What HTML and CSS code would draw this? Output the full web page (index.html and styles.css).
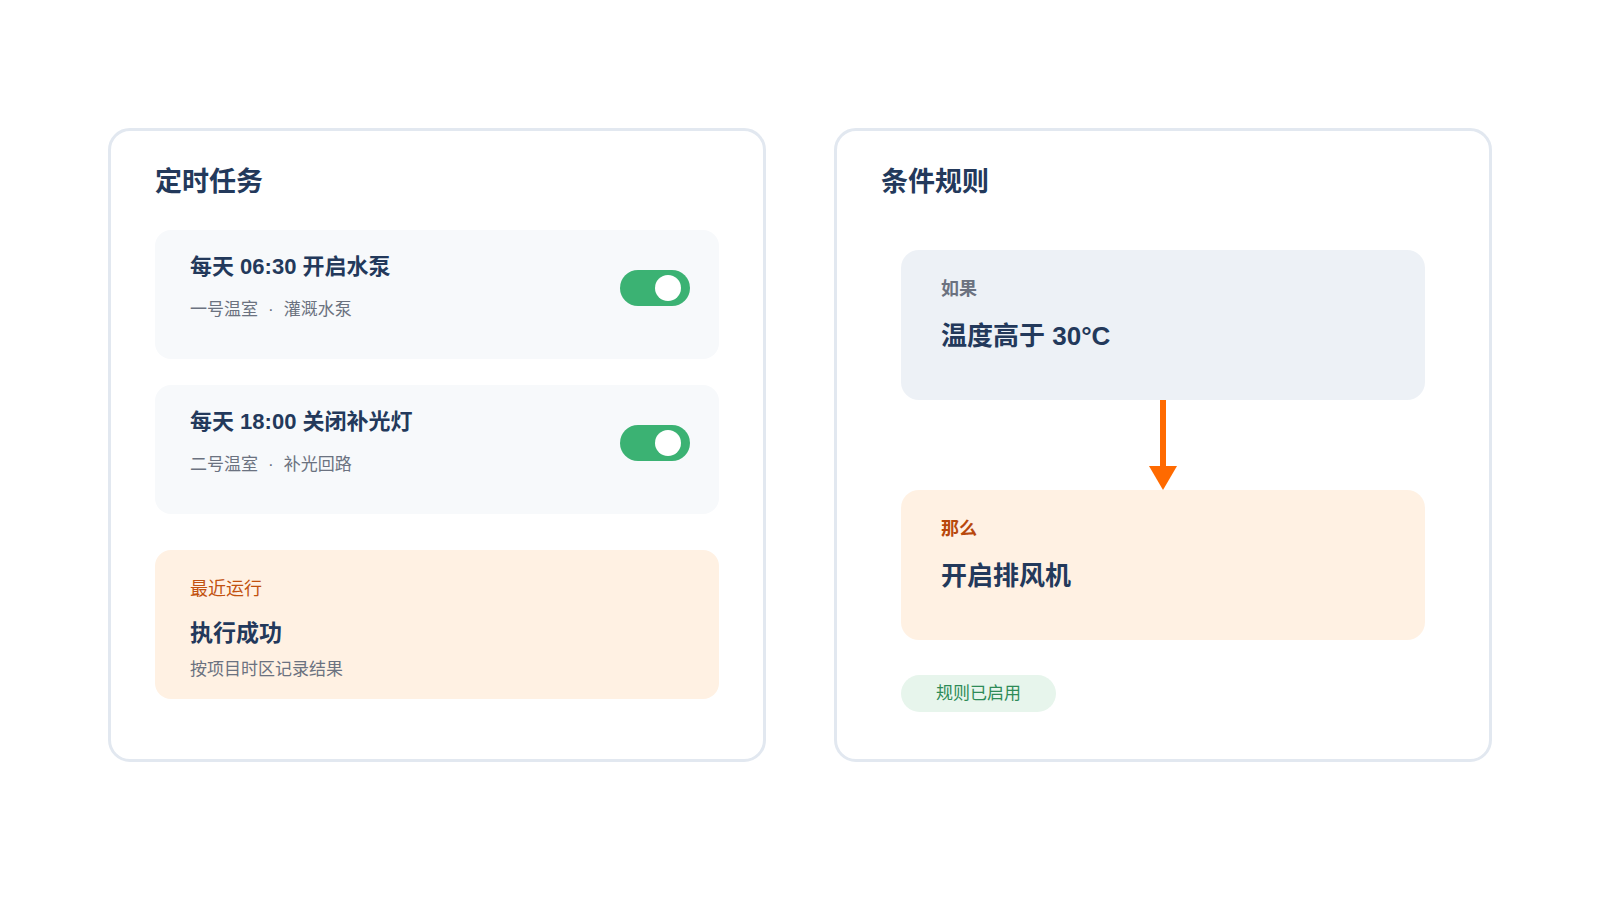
FILE: index.html
```html
<!DOCTYPE html>
<html lang="zh-CN">
<head>
    <meta charset="UTF-8">
    <meta name="viewport" content="width=device-width, initial-scale=1.0">
    <title>定时任务与条件规则</title>
    <link rel="stylesheet" href="styles.css">
</head>
<body>
<main class="board">

    <!-- 定时任务 -->
    <section class="panel">
        <h2 class="panel-title">定时任务</h2>

        <div class="task">
            <div class="task-text">
                <div class="task-name">每天 06:30 开启水泵</div>
                <div class="task-meta">一号温室<span class="sep">·</span>灌溉水泵</div>
            </div>
            <span class="toggle"><span class="knob"></span></span>
        </div>

        <div class="task">
            <div class="task-text">
                <div class="task-name">每天 18:00 关闭补光灯</div>
                <div class="task-meta">二号温室<span class="sep">·</span>补光回路</div>
            </div>
            <span class="toggle"><span class="knob"></span></span>
        </div>

        <div class="last-run">
            <div class="last-label">最近运行</div>
            <div class="last-result">执行成功</div>
            <div class="last-note">按项目时区记录结果</div>
        </div>
    </section>

    <!-- 条件规则 -->
    <section class="panel">
        <h2 class="panel-title">条件规则</h2>

        <div class="flow">
            <div class="step step-if">
                <div class="step-label">如果</div>
                <div class="step-value">温度高于 30°C</div>
            </div>

            <div class="connector">
                <svg width="28" height="90" viewBox="0 0 28 90">
                    <rect x="11" y="0" width="6" height="67" fill="#ff6a00"/>
                    <polygon points="0,66 28,66 14,90" fill="#ff6a00"/>
                </svg>
            </div>

            <div class="step step-then">
                <div class="step-label">那么</div>
                <div class="step-value">开启排风机</div>
            </div>

            <span class="pill">规则已启用</span>
        </div>
    </section>

</main>
</body>
</html>
```

FILE: styles.css
```css
body {
    margin: 0;
    background: #ffffff;
    font-family: "Liberation Sans", "Noto Sans CJK SC", sans-serif;
    color: #23395b;
}

.board {
    display: grid;
    grid-template-columns: 658px 658px;
    column-gap: 68px;
    justify-content: center;
    padding-top: 128px;
}

.panel {
    border: 3px solid #e2e8f0;
    border-radius: 22px;
    background: #fff;
    padding: 34px 44px 27px 44px;
}

.panel-title {
    margin: 0 0 31px 0;
    font-size: 27px;
    line-height: 34px;
    font-weight: 700;
    color: #23395b;
}

.task {
    display: flex;
    align-items: center;
    justify-content: space-between;
    background: #f7f9fb;
    border-radius: 16px;
    padding: 22px 29px 37px 35px;
    margin-bottom: 26px;
}

.task-name {
    font-size: 22px;
    line-height: 30px;
    font-weight: 700;
}

.task-meta {
    margin-top: 16px;
    font-size: 17px;
    line-height: 24px;
    color: #6b7280;
}

.sep {
    margin: 0 10px;
}

.toggle {
    position: relative;
    width: 70px;
    height: 36px;
    margin-top: 2px;
    border-radius: 18px;
    background: #3bb273;
}

.knob {
    position: absolute;
    left: 35px;
    top: 5px;
    width: 26px;
    height: 26px;
    border-radius: 50%;
    background: #fff;
}

.last-run {
    margin-top: 36px;
    background: #fff1e3;
    border-radius: 16px;
    padding: 27px 35px 17px 35px;
}

.last-label {
    font-size: 18px;
    line-height: 24px;
    color: #c2510f;
}

.last-result {
    margin-top: 16px;
    font-size: 23px;
    line-height: 32px;
    font-weight: 700;
}

.last-note {
    margin-top: 9px;
    font-size: 17px;
    line-height: 24px;
    color: #6b7280;
}

.flow {
    padding: 20px 20px 20px 20px;
}

.step {
    border-radius: 18px;
    padding: 27px 40px 47px 40px;
}

.step-if {
    background: #edf1f6;
}

.step-then {
    background: #fff1e3;
}

.step-label {
    font-size: 18px;
    line-height: 24px;
    font-weight: 700;
    color: #6b7280;
}

.step-then .step-label {
    color: #b8480c;
}

.step-value {
    margin-top: 18px;
    font-size: 26px;
    line-height: 34px;
    font-weight: 700;
}

.connector {
    display: flex;
    justify-content: center;
    height: 90px;
}

.connector svg {
    display: block;
}

.pill {
    display: inline-block;
    margin-top: 35px;
    padding: 0 35px;
    height: 37px;
    line-height: 37px;
    border-radius: 19px;
    font-size: 17px;
    background: #e7f5ec;
    color: #2e8b57;
}
```
